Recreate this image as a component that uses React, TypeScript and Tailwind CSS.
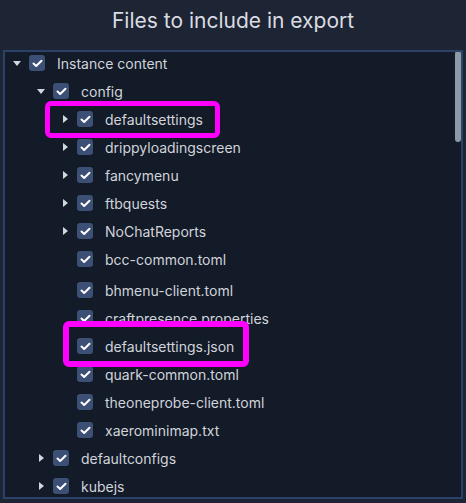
import React from 'react';

type Row = {
  label: string;
  level: number;
  arrow?: 'down' | 'right';
  extraTop?: boolean;
};

const rows: Row[] = [
  { label: 'Instance content', level: 0, arrow: 'down' },
  { label: 'config', level: 1, arrow: 'down' },
  { label: 'defaultsettings', level: 2, arrow: 'right' },
  { label: 'drippyloadingscreen', level: 2, arrow: 'right' },
  { label: 'fancymenu', level: 2, arrow: 'right' },
  { label: 'ftbquests', level: 2, arrow: 'right' },
  { label: 'NoChatReports', level: 2, arrow: 'right' },
  { label: 'bcc-common.toml', level: 2 },
  { label: 'bhmenu-client.toml', level: 2, extraTop: true },
  { label: 'craftpresence.properties', level: 2 },
  { label: 'defaultsettings.json', level: 2 },
  { label: 'quark-common.toml', level: 2 },
  { label: 'theoneprobe-client.toml', level: 2 },
  { label: 'xaerominimap.txt', level: 2 },
  { label: 'defaultconfigs', level: 1, arrow: 'right' },
  { label: 'kubejs', level: 1, arrow: 'right' },
];

const indents = ['pl-[6px]', 'pl-[30px]', 'pl-[54px]'];

function Arrow({ dir }: { dir?: 'down' | 'right' }) {
  return (
    <span className="w-[12px] h-[12px] flex items-center justify-center shrink-0">
      {dir === 'down' && (
        <svg width="8" height="5" viewBox="0 0 8 5">
          <polygon points="0,0 8,0 4,5" fill="#d3d7dd" />
        </svg>
      )}
      {dir === 'right' && (
        <svg width="5" height="8" viewBox="0 0 5 8">
          <polygon points="0,0 5,4 0,8" fill="#d3d7dd" />
        </svg>
      )}
    </span>
  );
}

function Checkbox() {
  return (
    <span className="w-[16px] h-[16px] rounded-[3px] bg-[#3c4f75] flex items-center justify-center shrink-0">
      <svg width="11" height="9" viewBox="0 0 11 9">
        <polyline
          points="1.5,4.5 4.2,7 9.5,1.8"
          fill="none"
          stroke="#ffffff"
          strokeWidth="2"
          strokeLinecap="round"
          strokeLinejoin="round"
        />
      </svg>
    </span>
  );
}

export default function App() {
  return (
    <div className="w-[466px] h-[503px] bg-[#1d2433] overflow-hidden font-['Inter','Noto_Sans',sans-serif]">
      <div className="h-[42px] flex items-center justify-center text-[21px] text-[#d9dce2]">
        Files to include in export
      </div>
      <div className="relative mt-[8px] ml-[3px] w-[460px] h-[449px] border-2 border-[#2c416a] bg-[#131a28] overflow-hidden">
        <div className="-mt-[3px]">
          {rows.map((r) => (
            <div
              key={r.label}
              className={`h-[28px] flex items-center gap-[6px] ${indents[r.level]} ${r.extraTop ? 'mt-[3px]' : ''}`}
            >
              <Arrow dir={r.arrow} />
              <Checkbox />
              <span className="ml-[6px] text-[14px] text-[#d0d4da] whitespace-nowrap">{r.label}</span>
            </div>
          ))}
        </div>

        {/* scrollbar thumb */}
        <div className="absolute right-0 top-[-1px] w-[6px] h-[91px] rounded-[3px] bg-[#8d9aa4]" />

        {/* highlight boxes */}
        <div className="absolute left-[40px] top-[49px] w-[175px] h-[37px] border-[5px] border-[#ff00ff] rounded-[6px]" />
        <div className="absolute left-[58px] top-[269px] w-[186px] h-[46px] border-[6px] border-[#ff00ff] rounded-[6px]" />
      </div>
    </div>
  );
}
